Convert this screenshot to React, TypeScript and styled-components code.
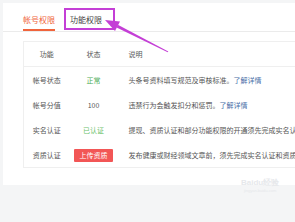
import React from 'react';
import styled, { createGlobalStyle } from 'styled-components';

const GlobalStyle = createGlobalStyle`
  html, body {
    margin: 0;
    padding: 0;
    background: #f4f5f6;
    overflow: hidden;
  }
  body {
    font-family: "Noto Sans CJK SC", "Noto Sans", sans-serif;
  }
`;

const Page = styled.div`
  position: relative;
  width: 295px;
  height: 222px;
  padding: 3px 0 0 3px;
  box-sizing: border-box;
  overflow: hidden;
`;

const Card = styled.div`
  width: 340px;
  height: 182px;
  background: #fff;
  box-sizing: border-box;
`;

const TabBar = styled.div`
  display: flex;
  gap: 15px;
  padding-left: 20px;
  border-bottom: 1px solid #ebebeb;
`;

const Tab = styled.div<{ $active?: boolean }>`
  position: relative;
  padding: 11px 0 3px;
  font-size: 8px;
  line-height: 12px;
  color: ${(p) => (p.$active ? '#f0643c' : '#444')};
  border-bottom: 2px solid ${(p) => (p.$active ? '#f0643c' : 'transparent')};
`;

const Highlight = styled.span`
  position: absolute;
  left: -6px;
  right: -13px;
  top: 5px;
  bottom: -1px;
  border: 2px solid #c43fd6;
`;

const Table = styled.table`
  margin: 9px 0 0 20px;
  width: 320px;
  border-collapse: collapse;
  table-layout: fixed;
  border: 1px solid #efefef;
  font-size: 7px;
  color: #555;
`;

const HeadCell = styled.th<{ $left?: boolean }>`
  height: 24px;
  padding: 0 0 0 ${(p) => (p.$left ? '11px' : '0')};
  font-weight: normal;
  color: #555;
  text-align: ${(p) => (p.$left ? 'left' : 'center')};
  border-bottom: 1px solid #efefef;
`;

const Cell = styled.td<{ $left?: boolean; $tone?: string }>`
  height: 24px;
  padding: 1px 0 0 ${(p) => (p.$left ? '11px' : '0')};
  text-align: ${(p) => (p.$left ? 'left' : 'center')};
  white-space: nowrap;
  overflow: hidden;
  color: ${(p) => p.$tone || '#555'};
`;

const Link = styled.span`
  color: #4a6fa8;
`;

const UploadButton = styled.span`
  display: inline-block;
  width: 39px;
  height: 13px;
  line-height: 13px;
  background: #f25656;
  color: #fff;
  border-radius: 1px;
  text-align: center;
`;

const Watermark = styled.div`
  position: absolute;
  left: 241px;
  top: 177px;
  display: flex;
  flex-direction: column;
  align-items: center;
  color: #e6e8eb;
  font-family: "Liberation Sans", sans-serif;
`;

const MarkTitle = styled.span`
  font-size: 8px;
  font-weight: bold;
  line-height: 11px;
  white-space: nowrap;
`;

const MarkSub = styled.span`
  font-size: 4px;
  line-height: 6px;
  white-space: nowrap;
`;

const Annotation = styled.svg`
  position: absolute;
  left: 0;
  top: 0;
  pointer-events: none;
`;

type Row = {
  name: string;
  state: React.ReactNode;
  tone?: string;
  text: string;
  link?: boolean;
};

const rows: Row[] = [
  { name: '帐号状态', state: '正常', tone: '#4fae5a', text: '头条号资料填写规范及审核标准。', link: true },
  { name: '帐号分值', state: '100', text: '违禁行为会触发扣分和惩罚。', link: true },
  { name: '实名认证', state: '已认证', tone: '#6cc26c', text: '提现、资质认证和部分功能权限的开通须先完成实名认证' },
  { name: '资质认证', state: <UploadButton>上传资质</UploadButton>, text: '发布健康或财经领域文章前，须先完成实名认证和资质认证' },
];

export default function App() {
  return (
    <Page>
      <GlobalStyle />
      <Card>
        <TabBar>
          <Tab $active>帐号权限</Tab>
          <Tab>
            功能权限
            <Highlight />
          </Tab>
        </TabBar>
        <Table>
          <colgroup>
            <col style={{ width: 46 }} />
            <col style={{ width: 48 }} />
            <col />
          </colgroup>
          <thead>
            <tr>
              <HeadCell>功能</HeadCell>
              <HeadCell>状态</HeadCell>
              <HeadCell $left>说明</HeadCell>
            </tr>
          </thead>
          <tbody>
            {rows.map((r) => (
              <tr key={r.name}>
                <Cell>{r.name}</Cell>
                <Cell $tone={r.tone}>{r.state}</Cell>
                <Cell $left $tone="#555">
                  {r.text}
                  {r.link && <Link>了解详情</Link>}
                </Cell>
              </tr>
            ))}
          </tbody>
        </Table>
      </Card>
      <Watermark>
        <MarkTitle>Baidu经验</MarkTitle>
        <MarkSub>jingyan.baidu.com</MarkSub>
      </Watermark>
      <Annotation width="295" height="222" viewBox="0 0 295 222">
        <polygon points="168.3,51.4 167.7,52.2 116.6,27.6 117.8,24.8" fill="#c43fd6" />
        <polygon points="105,20 120,21.5 115,31" fill="#c43fd6" />
      </Annotation>
    </Page>
  );
}
